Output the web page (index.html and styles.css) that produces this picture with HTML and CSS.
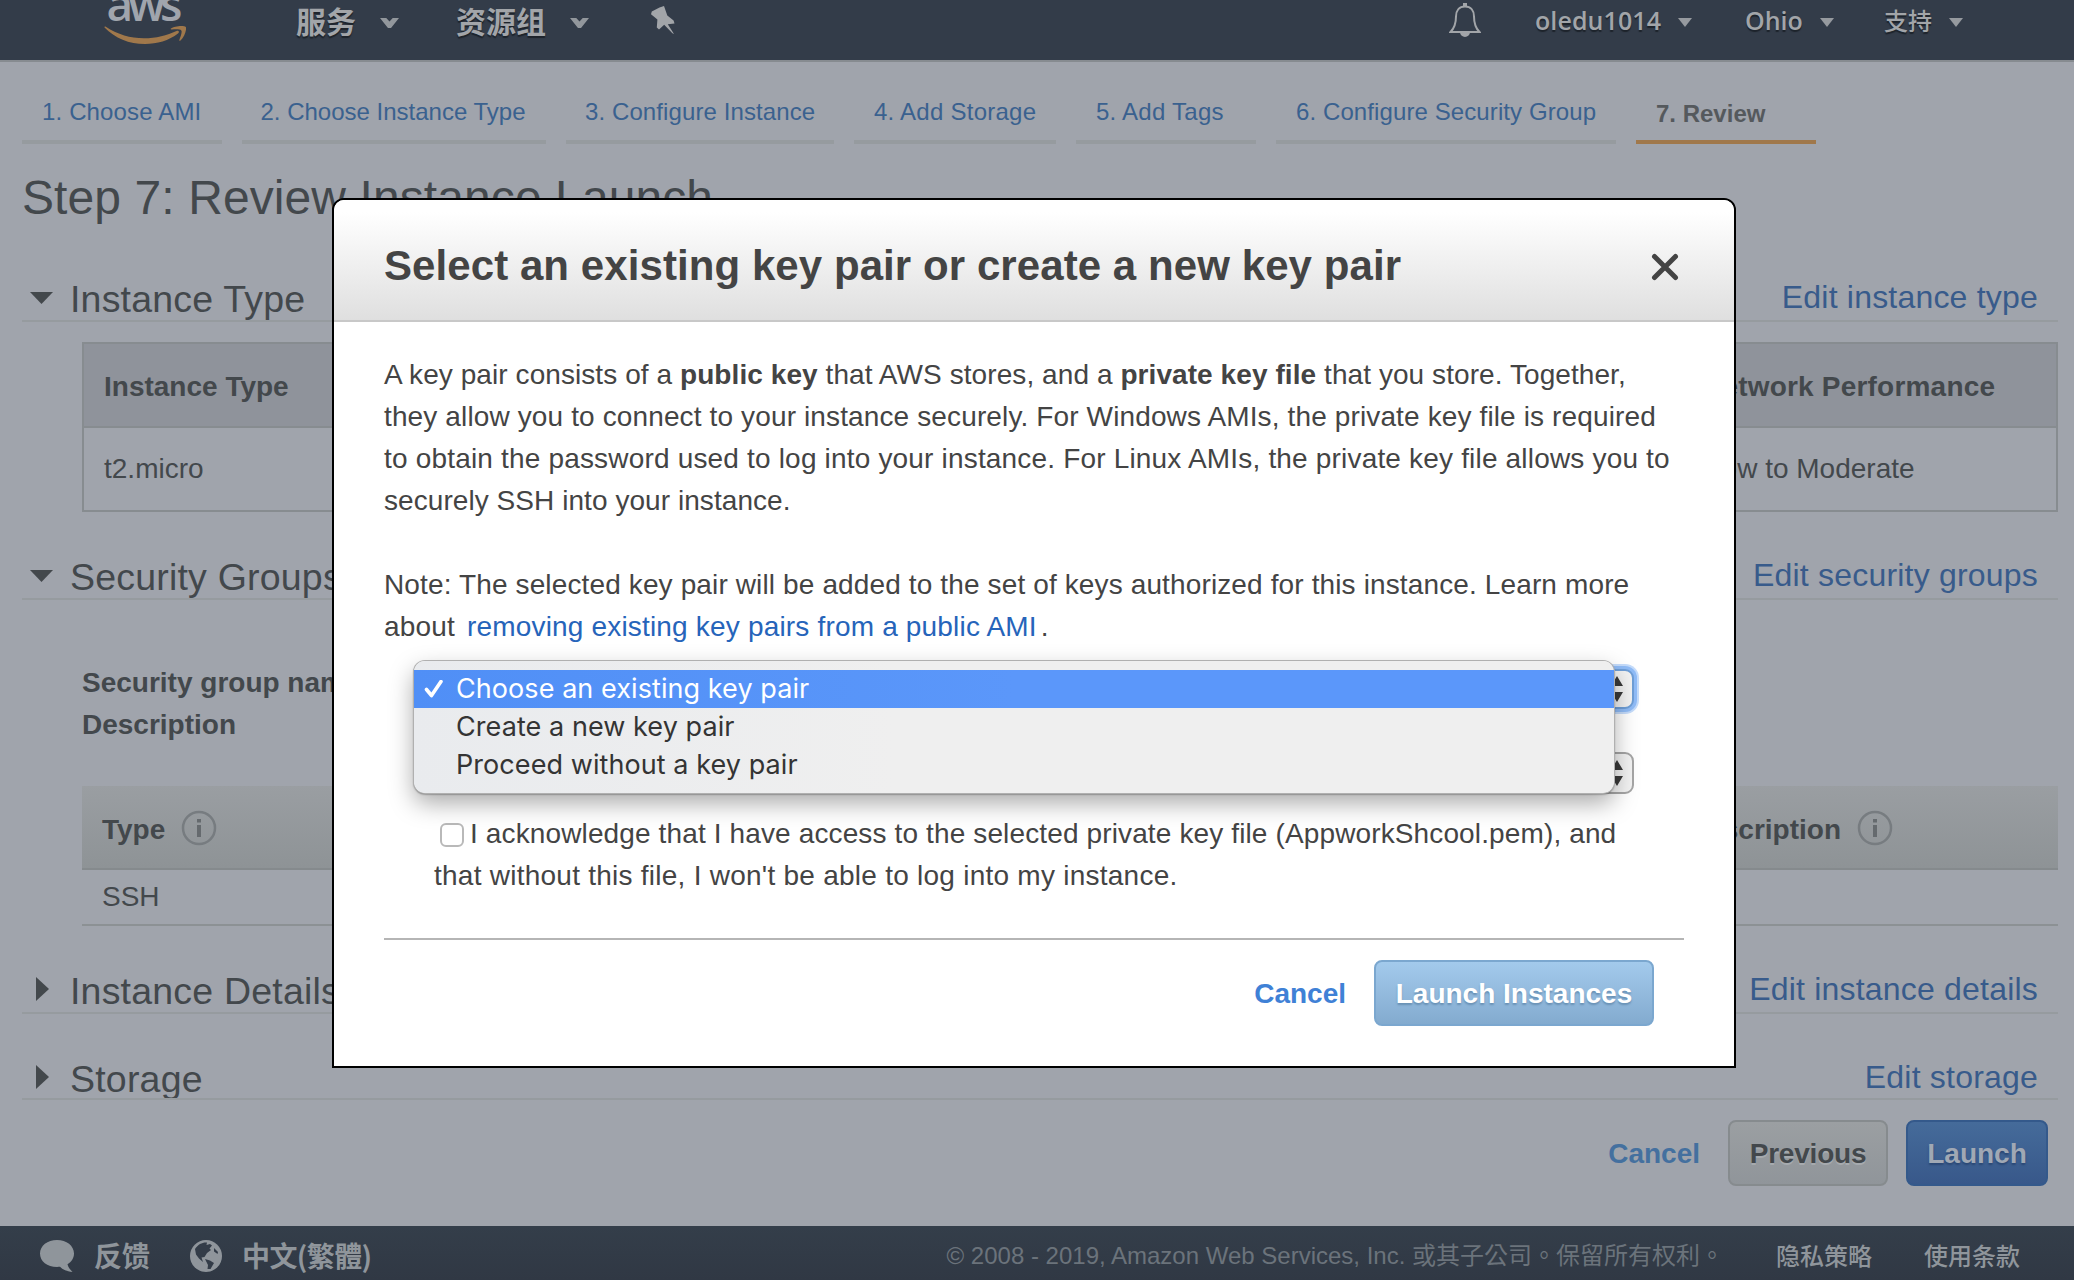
FILE: index.html
```html
<!DOCTYPE html>
<html lang="zh-CN">
<head>
<meta charset="utf-8">
<title>Review Instance Launch</title>
<link rel="stylesheet" href="styles.css">
</head>
<body>
<header class="nav">
  <svg class="nav-logo" width="82" height="46" viewBox="0 0 82 46">
    <text class="logo-word" x="2.500" y="20.500" textLength="76">aws</text>
    <path class="smile" d="M.5 27.400C.2 26.500 1 26.200 2.200 27C14 34.500 26 38.300 40 38.300C52 38.300 63 35.500 72.500 31C74.500 30.200 76 32 74 33.500C65 40.500 53 44 41 44C25 44 11 38 .5 27.400z"/>
    <path class="smile" d="M67 28.500C70 26 80 25 81.800 27C83 29 80.500 37 76.500 40.500C75.500 41.200 75 40.800 75.400 39.800C76.500 37 78.400 32 77.300 30.400C76 29 71 29.300 67.800 29.600C66.500 29.700 66.300 29 67 28.500z"/>
  </svg>
  <div class="nav-item nav-services">服务<i class="caret caret-lg"></i></div>
  <div class="nav-item nav-groups">资源组<i class="caret caret-lg"></i></div>
  <svg class="nav-pin" width="26" height="28" viewBox="0 0 26 28">
    <path fill="#a2a5a9" d="M9.500 1.600L14 0L17.300 9.500L23.600 14.600L24.500 17.600L17.800 18.300L24 28L22.400 27.200L14.200 18.800L9 23.600L6.800 21.400L7.400 13.500L1 8.200L1.800 5.500z"/>
  </svg>
  <svg class="nav-bell" width="32" height="36" viewBox="0 0 32 36" fill="none" stroke="#a2a5a9" stroke-width="2">
    <path d="M16 3.500C10 3.500 7 8 7 13.500C7 21 5.500 25 1.500 29H30.500C26.500 25 25 21 25 13.500C25 8 22 3.500 16 3.500z"/>
    <path fill="#a2a5a9" stroke="none" d="M14 0h4v4h-4zM11 29h10a5 5 0 0 1-10 0z"/>
  </svg>
  <div class="nav-item nav-user">oledu1014<i class="caret"></i></div>
  <div class="nav-item nav-region">Ohio<i class="caret"></i></div>
  <div class="nav-item nav-support">支持<i class="caret"></i></div>
</header>

<main class="page">
  <nav class="steps">
    <a class="step step-1">1. Choose AMI</a>
    <a class="step step-2">2. Choose Instance Type</a>
    <a class="step step-3">3. Configure Instance</a>
    <a class="step step-4">4. Add Storage</a>
    <a class="step step-5">5. Add Tags</a>
    <a class="step step-6">6. Configure Security Group</a>
    <a class="step step-7 active">7. Review</a>
  </nav>
  <h1 class="title">Step 7: Review Instance Launch</h1>

  <div class="section-head">
    <i class="tri tri-down"></i><h2>Instance Type</h2><a class="edit">Edit instance type</a>
  </div>
  <div class="type-table">
    <div class="type-row type-header"><span>Instance Type</span><span class="network">Network Performance</span></div>
    <div class="type-row"><span>t2.micro</span><span>Low to Moderate</span></div>
  </div>

  <div class="section-head">
    <i class="tri tri-down"></i><h2>Security Groups</h2><a class="edit">Edit security groups</a>
  </div>
  <div class="sg-info"><div>Security group name</div><div>Description</div></div>
  <div class="sg-table">
    <div class="sg-row sg-header">
      <span>Type<svg class="info" width="36" height="36" viewBox="0 0 36 36"><circle cx="18" cy="18" r="16"/><path d="M18 9v3.500M18 15v12"/></svg></span>
      <span>Description<svg class="info" width="36" height="36" viewBox="0 0 36 36"><circle cx="18" cy="18" r="16"/><path d="M18 9v3.500M18 15v12"/></svg></span>
    </div>
    <div class="sg-row"><span>SSH</span></div>
  </div>

  <div class="section-head collapsed">
    <i class="tri tri-right"></i><h2>Instance Details</h2><a class="edit">Edit instance details</a>
  </div>
  <div class="section-head last">
    <i class="tri tri-right"></i><h2>Storage</h2><a class="edit">Edit storage</a>
  </div>
  <div class="actions">
    <a class="cancel">Cancel</a>
    <button class="btn btn-previous">Previous</button>
    <button class="btn btn-launch">Launch</button>
  </div>
</main>

<footer class="footer">
  <svg class="bubble" width="34" height="32" viewBox="0 0 34 32"><path fill="#8f959b" d="M17 0C26.500 0 34 5.800 34 13.500C34 18 31.500 22 27.500 24.300C28 27 30 29.500 32.500 32C27 31.500 22.500 29.500 20 26.800C8.500 28 0 22 0 13.500C0 5.800 7.500 0 17 0z"/></svg>
  <span class="foot-main foot-feedback">反馈</span>
  <svg class="globe" width="32" height="32" viewBox="0 0 32 32"><circle cx="16" cy="16" r="16" fill="#8f959b"/><path fill="#333c48" d="M5 9C8 4 13 2 17 2.500L16.500 5L20 4L22 5.500L19.500 8.500L21 10L17 13L14.500 17L11.500 17.500L13 22L9 18.500L6 14.500zM24 8L28 12L27.500 14L24 11.500zM15 19L20 20.500L24 23L20.500 29L17.500 29L18 25z"/></svg>
  <span class="foot-main foot-lang">中文(繁體)</span>
  <span class="copyright" lang="zh-TW">© 2008 - 2019, Amazon Web Services, Inc. 或其子公司。保留所有权利。</span>
  <span class="foot-link">隐私策略</span>
  <span class="foot-link">使用条款</span>
</footer>

<div class="modal">
  <div class="modal-head">
    <h3>Select an existing key pair or create a new key pair</h3>
    <svg class="close" width="28" height="28" viewBox="0 0 28 28"><path d="M3.500 3.500L24.500 24.500M24.500 3.500L3.500 24.500"/></svg>
  </div>
  <div class="modal-body">
    <p class="copy">
      <span class="l1">A key pair consists of a <b>public key</b> that AWS stores, and a <b>private key file</b> that you store. Together,</span><br>
      <span class="l2">they allow you to connect to your instance securely. For Windows AMIs, the private key file is required</span><br>
      <span class="l3">to obtain the password used to log into your instance. For Linux AMIs, the private key file allows you to</span><br>
      <span class="l4">securely SSH into your instance.</span>
    </p>
    <p class="copy">
      <span class="l2">Note: The selected key pair will be added to the set of keys authorized for this instance. Learn more</span><br>
      <span class="l3">about <a class="learn">removing existing key pairs from a public AMI</a>.</span>
    </p>
    <div class="selects">
      <div class="select focused"><svg width="12" height="26" viewBox="0 0 12 26"><path d="M6 0L12 10H0zM6 26L12 16H0z"/></svg></div>
      <div class="select"><svg width="12" height="26" viewBox="0 0 12 26"><path d="M6 0L12 10H0zM6 26L12 16H0z"/></svg></div>
      <div class="popup">
        <div class="option selected"><svg class="check" width="20" height="18" viewBox="0 0 20 18"><path d="M2.500 9.500L7.500 15.500L17 1.500"/></svg><span>Choose an existing key pair</span></div>
        <div class="option"><span>Create a new key pair</span></div>
        <div class="option"><span>Proceed without a key pair</span></div>
      </div>
    </div>
    <label class="ack"><i class="box"></i><span class="l2">I acknowledge that I have access to the selected private key file (AppworkShcool.pem), and</span><br><span class="a2">that without this file, I won't be able to log into my instance.</span></label>
    <div class="modal-foot">
      <a class="cancel">Cancel</a>
      <button class="btn btn-instances">Launch Instances</button>
    </div>
  </div>
</div>
</body>
</html>
```
FILE: styles.css
```css
* { box-sizing: border-box; }
body {
  margin: 0;
  width: 2074px;
  height: 1280px;
  position: relative;
  overflow: hidden;
  display: flex;
  flex-direction: column;
  background: #a0a4ac;
  color: #43484c;
  font-family: "Liberation Sans", "Noto Sans CJK SC", sans-serif;
  font-size: 28px;
  white-space: nowrap;
}
h1, h2, h3, p { margin: 0; font-weight: normal; }

/* top navigation */
.nav {
  height: 62px;
  flex: none;
  display: flex;
  align-items: flex-start;
  background: #333c49;
  border-bottom: 2px solid #868b90;
  color: #a2a5a9;
}
.nav-logo { margin-left: 104px; flex: none; }
.logo-word { font: 600 46px "Open Sans", sans-serif; fill: #a0a5ad; }
.smile { fill: #a0784b; }
.nav-item {
  display: flex;
  align-items: center;
  height: 40px;
  text-shadow: 0 2px 1px #1d232b;
}
.nav-services, .nav-groups { font: 700 30px/40px "Noto Sans CJK SC", sans-serif; }
.nav-services { width: 160px; margin-left: 110px; }
.nav-groups { width: 194px; }
.nav-user, .nav-region { font: 600 25px/40px "Open Sans", sans-serif; }
.nav-support { font: 500 24px/40px "Noto Sans CJK SC", sans-serif; }
.nav-user { margin-left: 54px; width: 210px; letter-spacing: .1px; }
.nav-region { width: 139px; }
.nav-pin { margin-top: 6px; }
.nav-bell { margin: 3px 0 0 773px; }
.caret {
  margin: 5px 0 0 17px;
  border: 7px solid transparent;
  border-top: 9px solid #969a9f;
  border-bottom: 0;
}
.caret-lg {
  width: 19px;
  height: 10px;
  margin: 6px 0 0 24px;
  border: 0;
  background: #92979c;
  clip-path: polygon(0 0, 33% 0, 50% 36%, 67% 0, 100% 0, 58% 100%, 42% 100%);
}

/* launch wizard page */
.page { flex: 1; padding: 0 16px 0 22px; }
.steps { display: flex; gap: 20px; height: 82px; padding-top: 22px; }
.step {
  height: 60px;
  padding-left: 20px;
  line-height: 56px;
  font-size: 24px;
  letter-spacing: .15px;
  color: #3a618f;
  border-bottom: 4px solid #969b9f;
}
.step-1 { width: 200px; }
.step-2 { width: 304px; padding-left: 18.5px; letter-spacing: 0; }
.step-3 { width: 268px; padding-left: 19px; letter-spacing: .1px; }
.step-4 { width: 202px; letter-spacing: .25px; }
.step-5 { width: 180px; letter-spacing: .25px; }
.step-6 { width: 340px; letter-spacing: .1px; }
.step-7 { width: 180px; letter-spacing: 0; }
.step.active { color: #55595d; font-weight: bold; border-color: #a0784b; line-height: 60px; }
.title { height: 128px; padding-top: 26px; font-size: 48px; line-height: 56px; letter-spacing: .09px; }

.section-head {
  display: flex;
  height: 50px;
  margin-bottom: 20px;
  border-bottom: 2px solid #969b9f;
}
.section-head h2 { font-size: 37.5px; line-height: 54px; width: 1000px; letter-spacing: .2px; }
.edit { margin-left: auto; margin-right: 20px; font-size: 32px; line-height: 50px; letter-spacing: .2px; color: #385b8b; }
.section-head.collapsed { margin-bottom: 38px; }
.section-head.last { height: 48px; margin-bottom: 20px; overflow: hidden; }
.tri { width: 48px; flex: none; }
.tri::before { content: ""; display: block; background: #43484c; }
.tri-down::before { width: 23px; height: 12px; margin: 20px 0 0 8px; clip-path: polygon(0 0, 100% 0, 50% 100%); }
.tri-right::before { width: 13px; height: 24px; margin: 13px 0 0 14px; clip-path: polygon(0 0, 100% 50%, 0 100%); }

.type-table { margin: 0 0 38px 60px; border: 2px solid #878c90; }
.type-row { display: grid; grid-template-columns: 1602px 1fr; height: 82px; padding-left: 20px; line-height: 82px; }
.type-header { height: 84px; background: #8f939b; border-bottom: 2px solid #878c90; font-weight: bold; line-height: 86px; }
.network { margin-left: -4px; letter-spacing: .2px; }
.sg-info { padding: 42px 0 40px 60px; font-weight: bold; line-height: 42px; height: 166px; }
.sg-table { margin: 0 0 38px 60px; }
.sg-row { display: grid; grid-template-columns: 1585px 1fr; height: 56px; padding-left: 20px; line-height: 54px; border-bottom: 2px solid #8c9194; }
.sg-header { height: 84px; line-height: 84px; font-weight: bold; background: linear-gradient(#9a9ea2, #8e9396); border-color: #858a8d; }
.sg-row span { display: flex; align-items: center; }
.sg-header span { padding-top: 2px; }
.info { margin-left: 16px; margin-bottom: 4px; fill: none; stroke: #777c80; stroke-width: 2.500; }
.info path { stroke: #656a6e; stroke-width: 4; }

.actions { display: flex; align-items: center; justify-content: flex-end; padding-right: 10px; height: 66px; }
.cancel { font-weight: bold; color: #44709f; margin-right: 28px; padding-top: 2px; }
.btn {
  height: 66px;
  padding: 2px 0 0;
  border-radius: 8px;
  border: 2px solid;
  font: bold 28px "Liberation Sans", sans-serif;
}
.btn-previous { width: 160px; margin-right: 18px; color: #43484c; border-color: #868b8e; background: linear-gradient(#9b9fa2, #90959a); text-shadow: 0 2px 0 #a6aaae; letter-spacing: -.2px; }
.btn-launch { width: 142px; color: #a0a8b4; border-color: #34598b; background: linear-gradient(#456b9a, #38588a); text-shadow: 0 2px 2px #2a4774; }

/* footer */
.footer {
  height: 54px;
  flex: none;
  display: flex;
  align-items: center;
  padding: 0 54px 0 40px;
  background: linear-gradient(#343e4a, #303844);
  font-family: "Liberation Sans", "Noto Sans CJK TC", sans-serif;
  color: #8f959b;
}
.bubble, .globe { margin-top: 6px; }
.foot-main { font: bold 28px/54px "Noto Sans CJK SC", sans-serif; margin: 4px 0 0 20px; }
.foot-feedback { margin-right: 40px; }
.foot-lang { letter-spacing: -.6px; }
.copyright { margin: 6px 0 0 auto; font-size: 24px; line-height: 54px; color: #6b737b; }
.foot-link { margin: 4px 0 0 52px; font: 500 24px/54px "Noto Sans CJK SC", sans-serif; }

/* key pair dialog */
.modal {
  position: absolute;
  left: 332px;
  top: 198px;
  width: 1404px;
  height: 870px;
  border: 2px solid #000;
  border-radius: 12px 12px 0 0;
  background: #fff;
  color: #444;
  overflow: hidden;
}
.modal-head {
  display: flex;
  justify-content: space-between;
  align-items: center;
  height: 122px;
  padding: 0 55px 0 50px;
  border-bottom: 2px solid #c8c8c8;
  background: linear-gradient(#fff 10%, #dfdfdf);
}
.modal-head h3 { font-size: 42px; font-weight: bold; line-height: 60px; padding-top: 12px; letter-spacing: .075px; }
.close { margin-top: 14px; fill: none; stroke: #444; stroke-width: 5; stroke-linecap: round; }
.modal-body { padding: 32px 50px 0; }
.copy { line-height: 42px; height: 168px; margin-bottom: 42px; }
.copy + .copy { height: 84px; margin-bottom: 20px; }
.l1 { letter-spacing: .075px; }
.l2 { letter-spacing: .13px; }
.l3 { letter-spacing: .18px; }
.l4 { letter-spacing: .06px; }
.learn { color: #2664ba; margin-left: 4px; margin-right: 4px; }
.selects { position: relative; display: grid; gap: 43px; margin-left: 54px; width: 1196px; }
.select {
  display: flex;
  justify-content: flex-end;
  align-items: center;
  height: 42px;
  padding-right: 9px;
  border: 2px solid #a6a6a6;
  border-radius: 9px;
  background: #f3f3f3;
  fill: #3a3a3a;
}
.select.focused { height: 40px; margin-top: 1px; border-color: #6f9fd8; box-shadow: 0 0 0 3px #90bcf7, 0 0 0 5px #c5dcfb; }
.popup {
  position: absolute;
  left: -24px;
  top: -7px;
  width: 1200px;
  height: 132px;
  padding-top: 9px;
  border-radius: 11px;
  background: linear-gradient(90deg, #e9ebee, #efefef 40%);
  box-shadow: 0 0 0 1px #b0b0b0, 0 10px 24px rgba(0,0,0,.34), 0 1px 2px #444;
  color: #343434;
}
.option { height: 38px; line-height: 38px; padding-left: 42px; font-family: Inter, sans-serif; font-size: 27px; letter-spacing: .07px; }
.option.selected { display: flex; padding-left: 10px; color: #fff; background: linear-gradient(90deg, #508ff6, #5b97fa 50%); }
.check { margin: 10px 12px 0 0; fill: none; stroke: #fff; stroke-width: 3.6; stroke-linecap: round; stroke-linejoin: round; }
.ack { display: block; margin: 19px 0 0 50px; line-height: 42px; height: 125px; }
.a2 { letter-spacing: .25px; }
.box { display: inline-block; width: 24px; height: 24px; margin: 0 6px -4px 6px; border: 2px solid #b9b9b9; border-radius: 6px; background: #fff; }
.modal-foot { display: flex; justify-content: flex-end; align-items: flex-start; border-top: 2px solid #b5b5b5; padding: 20px 30px 0 0; }
.modal-foot .cancel { color: #3f81d6; line-height: 68px; padding-top: 0; }
.btn-instances { width: 280px; color: #fff; border-color: #7ba7cf; background: linear-gradient(#a3caec, #83abcf); text-shadow: 0 2px 2px #6890b4; }
```
